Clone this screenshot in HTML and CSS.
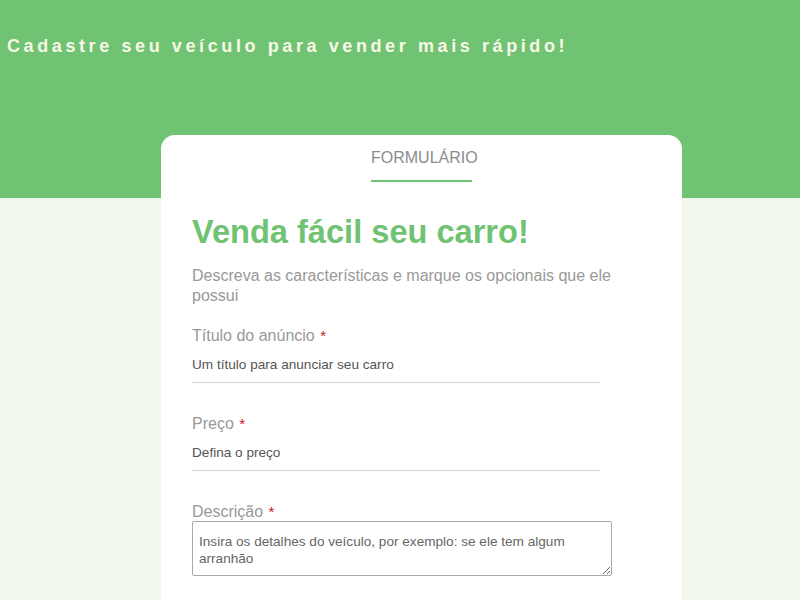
FILE: index.html
```html
<!DOCTYPE html>
<html lang="pt-BR">
<head>
<meta charset="utf-8">
<title>Cadastro de veículo</title>
<link rel="stylesheet" href="styles.css">
</head>
<body>
<header class="hero">
  <h1 class="hero-title">Cadastre seu veículo para vender mais rápido!</h1>
</header>
<main class="content">
  <section class="card">
    <div class="tab">
      <span class="tab-label">FORMULÁRIO</span>
    </div>
    <h2 class="card-title">Venda fácil seu carro!</h2>
    <p class="card-sub">Descreva as características e marque os opcionais que ele possui</p>
    <form class="form">
      <div class="field">
        <label class="label">Título do anúncio <span class="req">*</span></label>
        <input class="input" type="text" placeholder="Um título para anunciar seu carro">
      </div>
      <div class="field">
        <label class="label">Preço <span class="req">*</span></label>
        <input class="input" type="text" placeholder="Defina o preço">
      </div>
      <div class="field field-last">
        <label class="label">Descrição <span class="req">*</span></label>
        <textarea class="textarea" placeholder="Insira os detalhes do veículo, por exemplo: se ele tem algum arranhão"></textarea>
      </div>
    </form>
  </section>
</main>
</body>
</html>
```

FILE: styles.css
```css
html, body {
  margin: 0;
  padding: 0;
}
body {
  font-family: "Liberation Sans", Arial, sans-serif;
  background: #f1f7ec;
  height: 600px;
  overflow: hidden;
}
.hero {
  background: #6fc372;
  height: 198px;
  padding: 0 7px;
  box-sizing: border-box;
  overflow: hidden;
}
.hero-title {
  margin: 0;
  padding-top: 35px;
  font-size: 18px;
  line-height: 22px;
  font-weight: bold;
  letter-spacing: 3.6px;
  color: #f8f8e6;
}
.content {
  margin-top: -63px;
  padding-left: 161px;
}
.card {
  width: 521px;
  height: 465px;
  background: #fff;
  border-radius: 14px 14px 0 0;
  padding: 0 31px;
  box-sizing: border-box;
  overflow: hidden;
}
.tab {
  display: flex;
  justify-content: center;
  padding-top: 14px;
}
.tab-label {
  display: inline-block;
  width: 101px;
  text-align: center;
  font-size: 16px;
  line-height: 18px;
  color: #8c8c8c;
  padding-bottom: 13px;
  border-bottom: 2px solid #6fc372;
}
.card-title {
  margin: 31px 0 0;
  font-size: 32.6px;
  line-height: 38px;
  font-weight: bold;
  color: #6fc372;
}
.card-sub {
  margin: 15px 0 0;
  font-size: 16px;
  line-height: 20px;
  color: #999;
}
.form {
  margin-top: 21px;
}
.field {
  display: flex;
  flex-direction: column;
  align-items: flex-start;
  margin-bottom: 32px;
}
.field-last {
  margin-bottom: 0;
}
.label {
  font-size: 16px;
  line-height: 18px;
  color: #999;
}
.req {
  color: #c8102e;
  font-size: 15px;
  margin-left: 1px;
}
.input {
  width: 408px;
  border: none;
  border-bottom: 1px solid #d4d4d4;
  padding: 12px 0 9px;
  font-family: "Liberation Sans", Arial, sans-serif;
  font-size: 13.6px;
  line-height: 16px;
  outline: none;
  background: transparent;
}
.input::placeholder {
  color: #555;
  opacity: 1;
}
.textarea {
  margin-top: 0;
  width: 420px;
  height: 55px;
  box-sizing: border-box;
  border: 1px solid #a9a9a9;
  border-radius: 2px;
  padding: 11px 40px 4px 6px;
  font-family: "Liberation Sans", Arial, sans-serif;
  font-size: 13.6px;
  line-height: 17px;
  resize: both;
}
.textarea::placeholder {
  color: #666;
  opacity: 1;
}
```
